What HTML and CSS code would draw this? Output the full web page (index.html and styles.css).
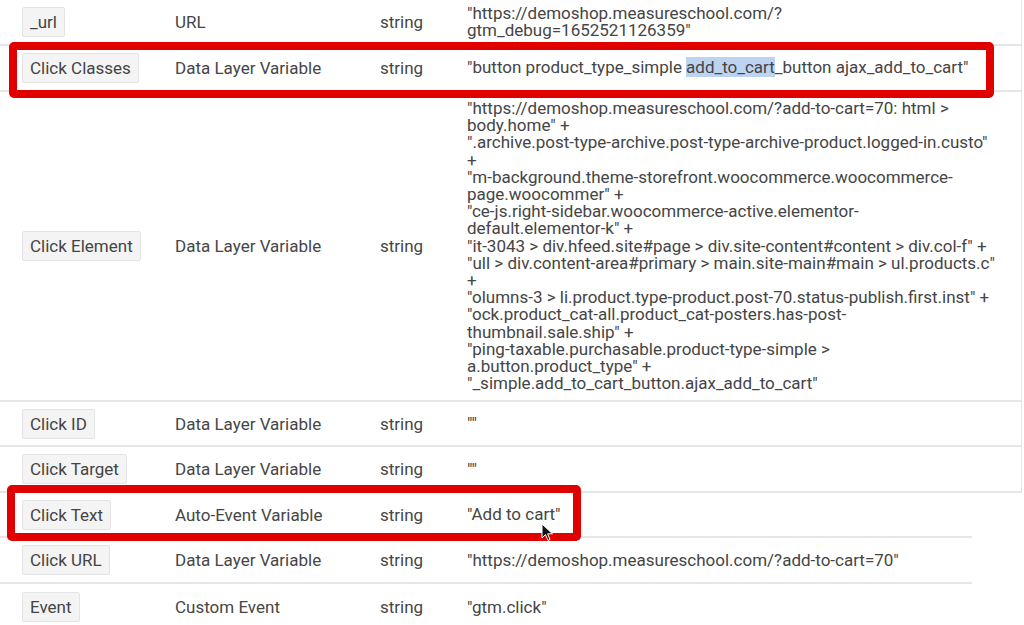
FILE: index.html
```html
<!DOCTYPE html>
<html>
<head>
<meta charset="utf-8">
<link rel="stylesheet" href="styles.css">
</head>
<body>
<div class="page">
  <div class="group group-upper">
    <div class="row">
      <div class="name"><span class="chip">_url</span></div>
      <div class="type">URL</div>
      <div class="fmt">string</div>
      <div class="val">"https://demoshop.measureschool.com/?<br>gtm_debug=1652521126359"</div>
    </div>
    <div class="row">
      <div class="name"><span class="chip">Click Classes</span></div>
      <div class="type">Data Layer Variable</div>
      <div class="fmt">string</div>
      <div class="val">"button product_type_simple <span class="sel">add_to_cart</span>_button ajax_add_to_cart"</div>
    </div>
    <div class="row tall">
      <div class="name"><span class="chip">Click Element</span></div>
      <div class="type">Data Layer Variable</div>
      <div class="fmt">string</div>
      <div class="val">"https://demoshop.measureschool.com/?add-to-cart=70: html &gt;<br>body.home" +<br>".archive.post-type-archive.post-type-archive-product.logged-in.custo"<br>+<br>"m-background.theme-storefront.woocommerce.woocommerce-<br>page.woocommer" +<br>"ce-js.right-sidebar.woocommerce-active.elementor-<br>default.elementor-k" +<br>"it-3043 &gt; div.hfeed.site#page &gt; div.site-content#content &gt; div.col-f" +<br>"ull &gt; div.content-area#primary &gt; main.site-main#main &gt; ul.products.c"<br>+<br>"olumns-3 &gt; li.product.type-product.post-70.status-publish.first.inst" +<br>"ock.product_cat-all.product_cat-posters.has-post-<br>thumbnail.sale.ship" +<br>"ping-taxable.purchasable.product-type-simple &gt;<br>a.button.product_type" +<br>"_simple.add_to_cart_button.ajax_add_to_cart"</div>
    </div>
    <div class="row short">
      <div class="name"><span class="chip">Click ID</span></div>
      <div class="type">Data Layer Variable</div>
      <div class="fmt">string</div>
      <div class="val">""</div>
    </div>
    <div class="row">
      <div class="name"><span class="chip">Click Target</span></div>
      <div class="type">Data Layer Variable</div>
      <div class="fmt">string</div>
      <div class="val">""</div>
    </div>
  </div>
  <div class="group group-lower">
    <div class="row short">
      <div class="name"><span class="chip">Click Text</span></div>
      <div class="type">Auto-Event Variable</div>
      <div class="fmt">string</div>
      <div class="val">"Add to cart"</div>
    </div>
    <div class="row">
      <div class="name"><span class="chip">Click URL</span></div>
      <div class="type">Data Layer Variable</div>
      <div class="fmt">string</div>
      <div class="val">"https://demoshop.measureschool.com/?add-to-cart=70"</div>
    </div>
    <div class="row last">
      <div class="name"><span class="chip">Event</span></div>
      <div class="type">Custom Event</div>
      <div class="fmt">string</div>
      <div class="val">"gtm.click"</div>
    </div>
  </div>

  <div class="hl hl-1"></div>
  <div class="hl hl-2"></div>
  <svg class="cursor" width="13" height="20" viewBox="0 0 13 20">
    <path d="M1 1 L1 15 L4.5 11.5 L7 17.5 L9 16.6 L6.6 10.8 L11.5 10.8 Z" fill="#111" stroke="#fff" stroke-width="1"/>
  </svg>
</div>
</body>
</html>
```

FILE: styles.css
```css
body {
  margin: 0;
  background: #fff;
  font-family: Roboto, "Liberation Sans", sans-serif;
  font-size: 17px;
  color: #454545;
}

.page {
  position: relative;
  width: 1024px;
  height: 625px;
  overflow: hidden;
}

.group-upper {
  width: 1021px;
  border-right: 1px solid #e6e6e6;
}

.group-lower {
  width: 972px;
}

.row {
  display: grid;
  grid-template-columns: 175px 205px 87px 1fr;
  align-items: center;
  min-height: 46px;
  box-sizing: border-box;
  border-bottom: 2px solid #e6e6e6;
}

.row.short {
  min-height: 45px;
}

.row.tall {
  padding: 8px 0;
}

.row.last {
  border-bottom: none;
}

.name {
  padding-left: 22px;
}

.chip {
  display: inline-block;
  height: 30px;
  line-height: 28px;
  padding: 0 7px;
  box-sizing: border-box;
  border: 1px solid #e4e4e4;
  border-radius: 2px;
  background: #f4f4f4;
  color: #444;
}

.type,
.fmt {
  color: #464646;
}

.val {
  line-height: 17.2px;
  white-space: nowrap;
}

.sel {
  background: #bcd3f2;
}

.hl {
  position: absolute;
  box-sizing: border-box;
  border: 8px solid #e00000;
  border-radius: 5px;
}

.hl-1 {
  left: 9px;
  top: 42px;
  width: 985px;
  height: 56px;
}

.hl-2 {
  left: 7px;
  top: 485px;
  width: 574px;
  height: 56px;
}

.cursor {
  position: absolute;
  left: 541px;
  top: 523px;
}
```
